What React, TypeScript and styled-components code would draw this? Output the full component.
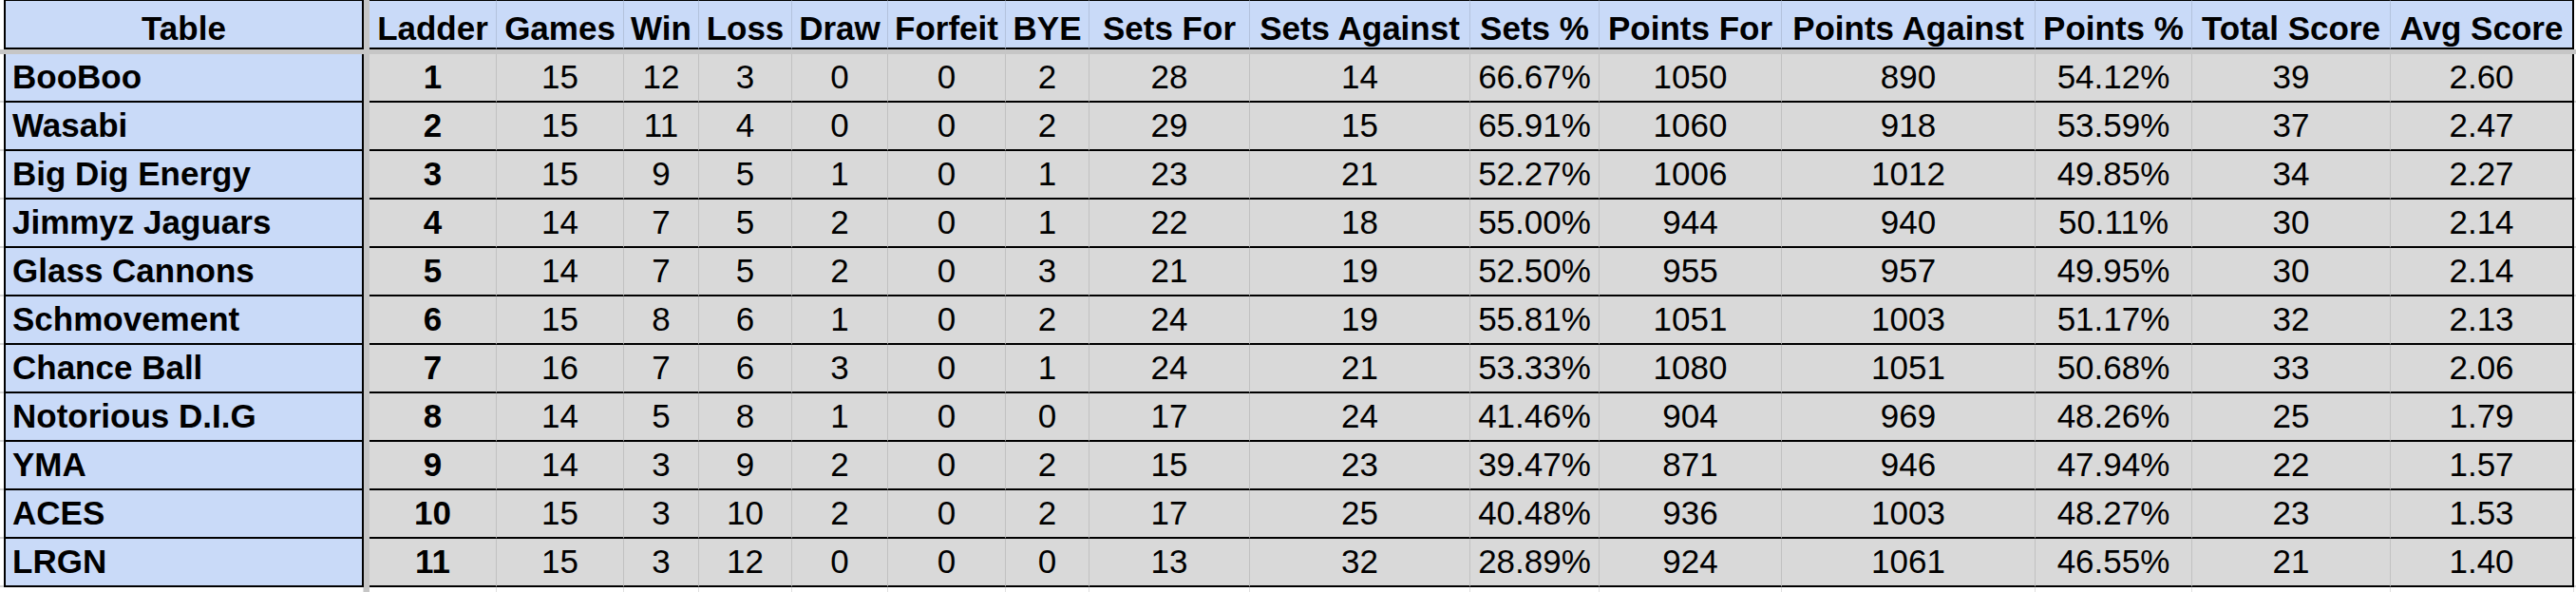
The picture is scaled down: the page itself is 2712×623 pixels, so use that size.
import React from "react";
import styled, { createGlobalStyle, css } from "styled-components";

const GlobalStyle = createGlobalStyle`
  * { box-sizing: border-box; }
  html, body { margin: 0; padding: 0; background: #ffffff; }
  body { font-family: "Liberation Sans", Arial, sans-serif; color: #000; }
`;

const COLS =
  "4px 379px 6px 134px 134px 79px 98px 101px 124px 88px 169px 232px 136px 192px 267px 165px 209px 193px 2px";

const BLUE = "#c9daf8";
const GRAY = "#d9d9d9";
const FREEZE = "#c6c6c6";
const DIVIDER = "rgba(0,0,0,0.11)";

const Sheet = styled.div`
  width: 2712px;
  display: flex;
  flex-direction: column;
`;

const Row = styled.div<{ $h: number }>`
  display: grid;
  grid-template-columns: ${COLS};
  height: ${(p) => p.$h}px;
`;

const Gutter = styled.div<{ $tick?: boolean }>`
  background: #ffffff;
  ${(p) =>
    p.$tick &&
    css`
      border-bottom: 2px solid #d6d6d6;
    `}
`;

const FreezeCol = styled.div`
  background: ${FREEZE};
`;

const FreezeBar = styled.div`
  grid-column: 1 / -1;
  background: ${FREEZE};
`;

const baseText = css`
  font-size: 35px;
  line-height: 1.15;
  white-space: nowrap;
  overflow: hidden;
  display: flex;
`;

const HeaderCell = styled.div<{ $first?: boolean; $last?: boolean }>`
  ${baseText};
  background: ${BLUE};
  font-weight: 700;
  justify-content: center;
  align-items: flex-end;
  border-top: 1px solid #000;
  border-bottom: 2px solid #000;
  border-right: ${(p) => (p.$first || p.$last ? "2px solid #000" : `1px solid ${DIVIDER}`)};
  ${(p) =>
    p.$first &&
    css`
      border-left: 2px solid #000;
    `}
`;

const NameCell = styled.div`
  ${baseText};
  background: ${BLUE};
  font-weight: 700;
  align-items: center;
  padding-left: 7px;
  border-left: 2px solid #000;
  border-right: 2px solid #000;
  border-bottom: 2px solid #000;
`;

const DataCell = styled.div<{ $bold?: boolean; $last?: boolean }>`
  ${baseText};
  background: ${GRAY};
  font-weight: ${(p) => (p.$bold ? 700 : 400)};
  justify-content: center;
  align-items: center;
  border-bottom: 2px solid #000;
  border-right: ${(p) => (p.$last ? "2px solid #000" : `1px solid ${DIVIDER}`)};
`;

const FootCell = styled.div<{ $line?: boolean }>`
  background: #ffffff;
  ${(p) =>
    p.$line &&
    css`
      border-right: 1px solid #e0e0e0;
    `}
`;

const headers = [
  "Ladder",
  "Games",
  "Win",
  "Loss",
  "Draw",
  "Forfeit",
  "BYE",
  "Sets For",
  "Sets Against",
  "Sets %",
  "Points For",
  "Points Against",
  "Points %",
  "Total Score",
  "Avg Score",
];

type Team = [string, ...string[]];

const teams: Team[] = [
  ["BooBoo", "1", "15", "12", "3", "0", "0", "2", "28", "14", "66.67%", "1050", "890", "54.12%", "39", "2.60"],
  ["Wasabi", "2", "15", "11", "4", "0", "0", "2", "29", "15", "65.91%", "1060", "918", "53.59%", "37", "2.47"],
  ["Big Dig Energy", "3", "15", "9", "5", "1", "0", "1", "23", "21", "52.27%", "1006", "1012", "49.85%", "34", "2.27"],
  ["Jimmyz Jaguars", "4", "14", "7", "5", "2", "0", "1", "22", "18", "55.00%", "944", "940", "50.11%", "30", "2.14"],
  ["Glass Cannons", "5", "14", "7", "5", "2", "0", "3", "21", "19", "52.50%", "955", "957", "49.95%", "30", "2.14"],
  ["Schmovement", "6", "15", "8", "6", "1", "0", "2", "24", "19", "55.81%", "1051", "1003", "51.17%", "32", "2.13"],
  ["Chance Ball", "7", "16", "7", "6", "3", "0", "1", "24", "21", "53.33%", "1080", "1051", "50.68%", "33", "2.06"],
  ["Notorious D.I.G", "8", "14", "5", "8", "1", "0", "0", "17", "24", "41.46%", "904", "969", "48.26%", "25", "1.79"],
  ["YMA", "9", "14", "3", "9", "2", "0", "2", "15", "23", "39.47%", "871", "946", "47.94%", "22", "1.57"],
  ["ACES", "10", "15", "3", "10", "2", "0", "2", "17", "25", "40.48%", "936", "1003", "48.27%", "23", "1.53"],
  ["LRGN", "11", "15", "3", "12", "0", "0", "0", "13", "32", "28.89%", "924", "1061", "46.55%", "21", "1.40"],
];

export default function App() {
  return (
    <>
      <GlobalStyle />
      <Sheet>
        <Row $h={52}>
          <Gutter />
          <HeaderCell $first>Table</HeaderCell>
          <FreezeCol />
          {headers.map((h, i) => (
            <HeaderCell key={h} $last={i === headers.length - 1}>
              {h}
            </HeaderCell>
          ))}
          <Gutter />
        </Row>
        <Row $h={5}>
          <FreezeBar />
        </Row>
        {teams.map(([name, ...vals]) => (
          <Row $h={51} key={name}>
            <Gutter $tick />
            <NameCell>{name}</NameCell>
            <FreezeCol />
            {vals.map((v, i) => (
              <DataCell key={i} $bold={i === 0} $last={i === vals.length - 1}>
                {v}
              </DataCell>
            ))}
            <Gutter $tick />
          </Row>
        ))}
        <Row $h={5}>
          <FootCell />
          <FootCell $line />
          <FreezeCol />
          {headers.map((h) => (
            <FootCell key={h} $line />
          ))}
          <FootCell />
        </Row>
      </Sheet>
    </>
  );
}
